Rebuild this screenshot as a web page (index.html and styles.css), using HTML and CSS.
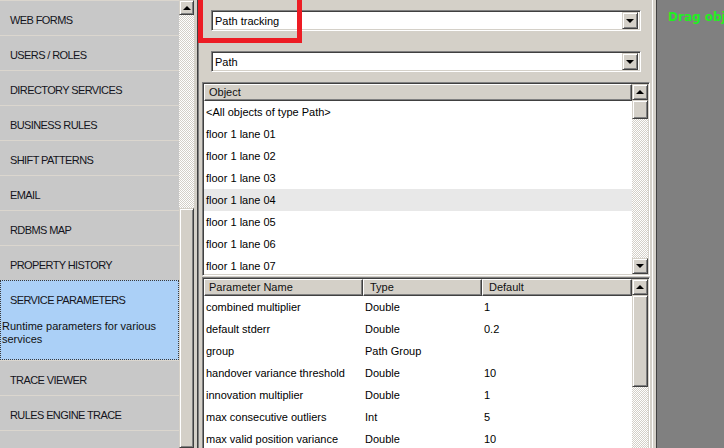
FILE: index.html
```html
<!DOCTYPE html>
<html>
<head>
<meta charset="utf-8">
<title>Service Parameters</title>
<link rel="stylesheet" href="styles.css">
</head>
<body>
<div class="app">
  <div class="side">
    <ul class="nav">
      <li class="nav-item">WEB FORMS</li>
      <li class="nav-item">USERS / ROLES</li>
      <li class="nav-item">DIRECTORY SERVICES</li>
      <li class="nav-item">BUSINESS RULES</li>
      <li class="nav-item">SHIFT PATTERNS</li>
      <li class="nav-item">EMAIL</li>
      <li class="nav-item">RDBMS MAP</li>
      <li class="nav-item">PROPERTY HISTORY</li>
      <li class="nav-item sel">
        <div class="nav-title">SERVICE PARAMETERS</div>
        <div class="nav-desc">Runtime parameters for various services</div>
      </li>
      <li class="nav-item">TRACE VIEWER</li>
      <li class="nav-item">RULES ENGINE TRACE</li>
      <li class="nav-item"></li>
    </ul>
    <div class="vscroll side-scroll">
      <div class="sbtn"><i class="tri-up"></i></div>
      <div class="track side-track"></div>
      <div class="thumb side-thumb"></div>
    </div>
    <div class="side-gap"></div>
  </div>

  <div class="main">
    <div class="combo">
      <span class="combo-text">Path tracking</span>
      <span class="cbtn"><i class="tri-down"></i></span>
    </div>
    <div class="combo combo2">
      <span class="combo-text">Path</span>
      <span class="cbtn"><i class="tri-down"></i></span>
    </div>

    <div class="grid objgrid">
      <div class="grid-body">
        <div class="ghead obj-cols">
          <div class="hcell">Object</div>
        </div>
        <div class="rows">
          <div class="row obj-cols"><span>&lt;All objects of type Path&gt;</span></div>
          <div class="row obj-cols"><span>floor 1 lane 01</span></div>
          <div class="row obj-cols"><span>floor 1 lane 02</span></div>
          <div class="row obj-cols"><span>floor 1 lane 03</span></div>
          <div class="row obj-cols hover"><span>floor 1 lane 04</span></div>
          <div class="row obj-cols"><span>floor 1 lane 05</span></div>
          <div class="row obj-cols"><span>floor 1 lane 06</span></div>
          <div class="row obj-cols"><span>floor 1 lane 07</span></div>
        </div>
      </div>
      <div class="vscroll grid-scroll">
        <div class="sbtn"><i class="tri-up"></i></div>
        <div class="thumb obj-thumb"></div>
        <div class="track"></div>
        <div class="sbtn"><i class="tri-down"></i></div>
      </div>
    </div>

    <div class="grid paramgrid">
      <div class="grid-body">
        <div class="ghead param-cols">
          <div class="hcell">Parameter Name</div>
          <div class="hcell">Type</div>
          <div class="hcell">Default</div>
        </div>
        <div class="rows">
          <div class="row param-cols"><span>combined multiplier</span><span>Double</span><span>1</span></div>
          <div class="row param-cols"><span>default stderr</span><span>Double</span><span>0.2</span></div>
          <div class="row param-cols"><span>group</span><span>Path Group</span><span></span></div>
          <div class="row param-cols"><span>handover variance threshold</span><span>Double</span><span>10</span></div>
          <div class="row param-cols"><span>innovation multiplier</span><span>Double</span><span>1</span></div>
          <div class="row param-cols"><span>max consecutive outliers</span><span>Int</span><span>5</span></div>
          <div class="row param-cols last"><span>max valid position variance</span><span>Double</span><span>10</span></div>
        </div>
      </div>
      <div class="vscroll grid-scroll">
        <div class="sbtn"><i class="tri-up"></i></div>
        <div class="thumb param-thumb"></div>
        <div class="track"></div>
      </div>
    </div>
  </div>

  <div class="splitter"></div>
  <div class="drop">Drag obj</div>
</div>
<div class="highlight"></div>
</body>
</html>
```

FILE: styles.css
```css
html, body {
  margin: 0;
  padding: 0;
  width: 724px;
  height: 448px;
  overflow: hidden;
  background: #808080;
}
body {
  font-family: "Liberation Sans", Arial, sans-serif;
  font-size: 11px;
  color: #000;
  position: relative;
}
.app {
  display: flex;
  height: 448px;
  width: 724px;
}

/* ---------- sidebar ---------- */
.side {
  display: flex;
  flex: 0 0 197px;
  height: 448px;
  background: #d4d0c8;
}
.nav {
  list-style: none;
  margin: 0;
  padding: 0;
  width: 179px;
  flex: 0 0 179px;
  background: #c8c8c8;
  overflow: hidden;
}
.nav-item {
  box-sizing: border-box;
  height: 35px;
  border-top: 1px solid #dbd6ce;
  padding: 13px 0 0 10px;
  line-height: 13px;
  color: #141420;
  letter-spacing: -0.6px;
  white-space: nowrap;
}
.nav-item.sel {
  height: 80px;
  padding: 0;
  background: #abd0f7;
  border: 1px dotted #3a3a3a;
  letter-spacing: 0;
  white-space: normal;
}
.nav-title {
  padding: 13px 0 0 9px;
  letter-spacing: -0.6px;
  white-space: nowrap;
}
.nav-desc {
  margin-top: 13px;
  padding: 0 4px 0 1px;
  line-height: 13px;
  color: #111;
}
.side-gap {
  flex: 0 0 3px;
  background: #d4d0c8;
}

/* ---------- scrollbars ---------- */
.vscroll {
  display: flex;
  flex-direction: column;
  background: #d4d0c8;
}
.side-scroll {
  flex: 0 0 15px;
  width: 15px;
}
.grid-scroll {
  flex: 0 0 16px;
  width: 16px;
}
.sbtn, .thumb {
  box-sizing: border-box;
  background: #d4d0c8;
  border: 1px solid;
  border-color: #d4d0c8 #404040 #404040 #d4d0c8;
  box-shadow: inset 1px 1px #fff, inset -1px -1px #808080;
}
.sbtn {
  flex: 0 0 16px;
  height: 16px;
  display: flex;
  align-items: center;
  justify-content: center;
}
.side-scroll .sbtn {
  flex-basis: 15px;
  height: 15px;
}
.track {
  flex: 1 1 auto;
  background-image: repeating-conic-gradient(#ffffff 0 25%, #d4d0c8 0 50%);
  background-size: 2px 2px;
}
.side-track {
  flex: 0 0 193px;
}
.side-thumb {
  flex: 1 1 auto;
}
.obj-thumb {
  flex: 0 0 19px;
}
.param-thumb {
  flex: 0 0 92px;
}
.tri-up {
  width: 0;
  height: 0;
  border-left: 4px solid transparent;
  border-right: 4px solid transparent;
  border-bottom: 4px solid #000;
}
.tri-down {
  width: 0;
  height: 0;
  border-left: 4px solid transparent;
  border-right: 4px solid transparent;
  border-top: 4px solid #000;
}

/* ---------- main panel ---------- */
.main {
  flex: 0 0 455px;
  box-sizing: border-box;
  height: 448px;
  background: #d4d0c8;
  border-left: 1px solid #404040;
  box-shadow: inset 1px 0 #808080;
  padding: 10px 0 0 4px;
  overflow: hidden;
}
.combo {
  box-sizing: border-box;
  display: flex;
  align-items: center;
  width: 430px;
  height: 21px;
  margin-left: 9px;
  background: #fff;
  border: 1px solid;
  border-color: #808080 #fff #fff #808080;
  box-shadow: inset 1px 1px #404040, inset -1px -1px #d4d0c8;
  padding: 0 2px 0 3px;
}
.combo2 {
  margin-top: 20px;
}
.combo-text {
  flex: 1 1 auto;
  line-height: 17px;
  padding-top: 1px;
}
.cbtn {
  box-sizing: border-box;
  width: 16px;
  height: 17px;
  display: flex;
  align-items: center;
  justify-content: center;
  background: #d4d0c8;
  border: 1px solid;
  border-color: #d4d0c8 #404040 #404040 #d4d0c8;
  box-shadow: inset 1px 1px #fff, inset -1px -1px #808080;
}

/* ---------- grids ---------- */
.grid {
  box-sizing: border-box;
  display: flex;
  width: 448px;
  background: #fff;
  border: 1px solid;
  border-color: #808080 #fff #fff #808080;
  box-shadow: inset 1px 1px #404040, inset -1px -1px #d4d0c8;
  padding: 1px;
}
.objgrid {
  margin-top: 10px;
  height: 194px;
}
.paramgrid {
  margin-top: 1px;
  height: 200px;
}
.grid-body {
  flex: 1 1 auto;
  overflow: hidden;
}
.ghead {
  height: 17px;
  background: #d4d0c8;
}
.hcell {
  box-sizing: border-box;
  height: 17px;
  line-height: 15px;
  padding-left: 4px;
  border: 1px solid;
  border-color: #fff #404040 #404040 #fff;
  box-shadow: inset -1px -1px #808080;
  color: #111;
  white-space: nowrap;
  overflow: hidden;
}
.obj-cols {
  display: grid;
  grid-template-columns: 1fr;
}
.param-cols {
  display: grid;
  grid-template-columns: 159px 119px 1fr;
}
.param-cols .hcell + .hcell {
  padding-left: 6px;
}
.rows {
  overflow: hidden;
}
.row {
  height: 22px;
  line-height: 22px;
  white-space: nowrap;
}
.row.last {
  height: 20px;
  line-height: 20px;
  padding-top: 1px;
}
.row span {
  padding-left: 2px;
  overflow: hidden;
}
.row.hover {
  background: #e8e8e8;
}

/* ---------- splitter / drop area ---------- */
.splitter {
  flex: 0 0 5px;
  box-sizing: border-box;
  height: 448px;
  background: #d4d0c8;
  border-left: 1px solid #fff;
  border-right: 1px solid #404040;
}
.drop {
  flex: 1 1 auto;
  overflow: hidden;
  white-space: nowrap;
  background: #808080;
  color: #22ee22;
  font-family: "DejaVu Sans", Verdana, sans-serif;
  font-weight: bold;
  font-size: 12px;
  padding: 10px 0 0 11px;
  line-height: 15px;
}

/* ---------- annotation ---------- */
.highlight {
  position: absolute;
  left: 198px;
  top: -5px;
  width: 104px;
  height: 48px;
  box-sizing: border-box;
  border: 5px solid #ed1c24;
}
```
